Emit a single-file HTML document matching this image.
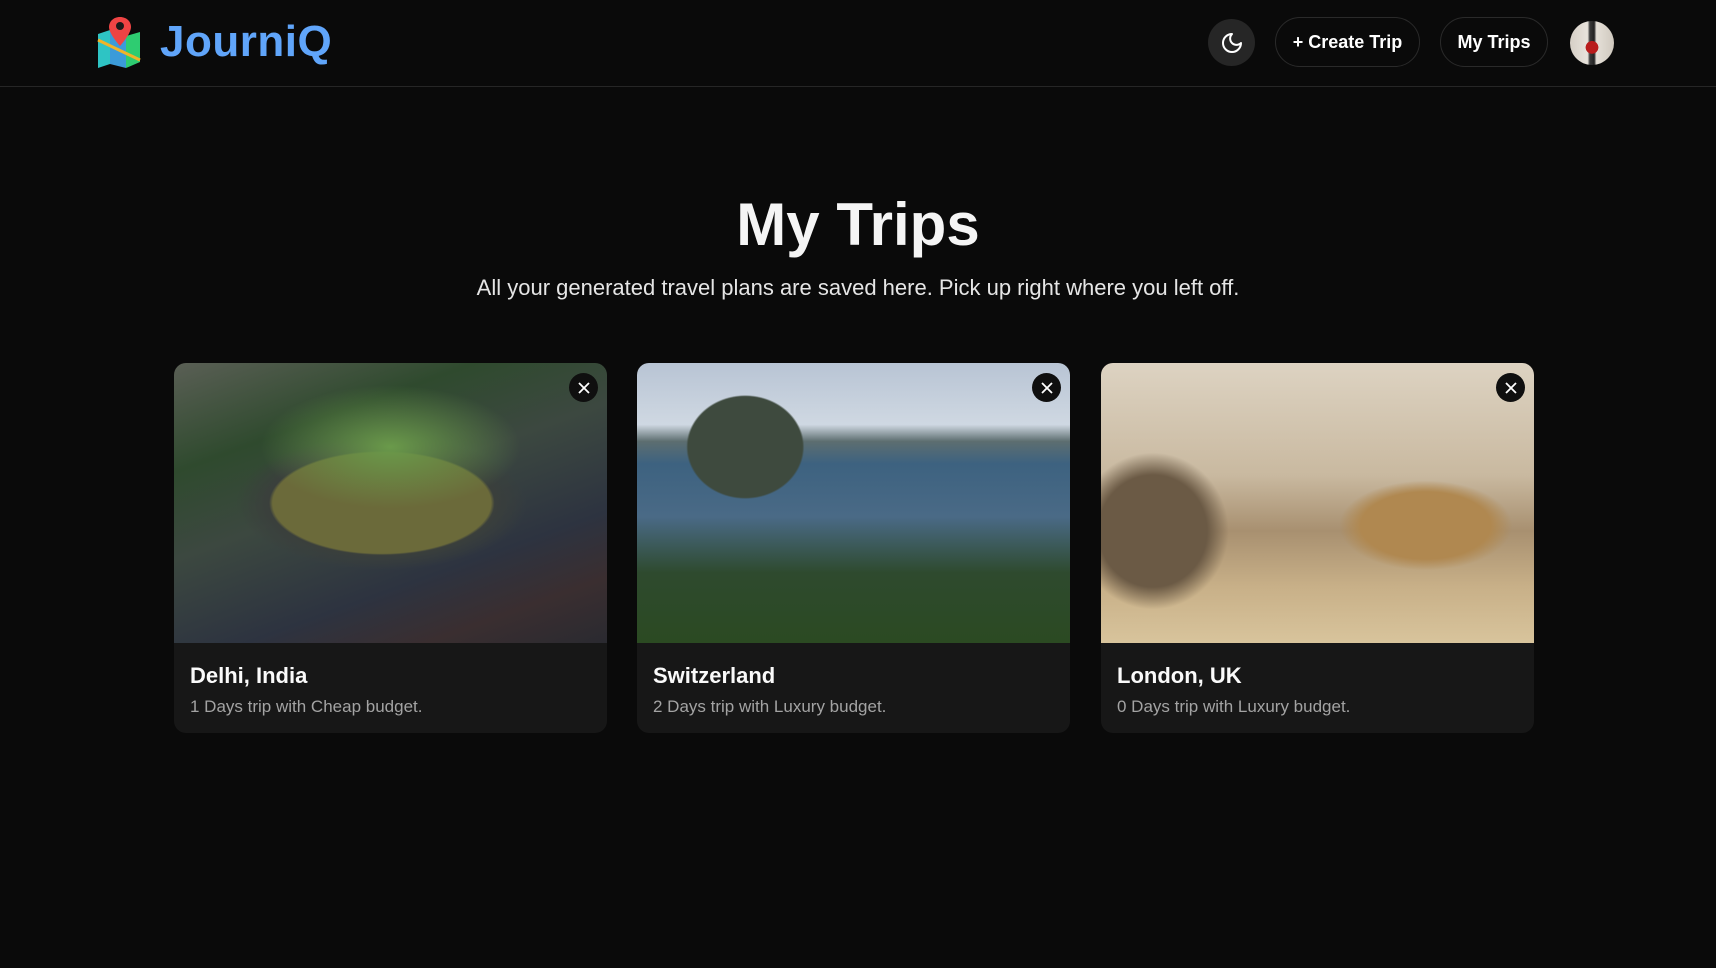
<!DOCTYPE html>
<html><head><meta charset="utf-8"><style>
*{margin:0;padding:0;box-sizing:border-box}
body{width:1716px;height:968px;background:#0a0a0a;font-family:"Liberation Sans",sans-serif;color:#fff;overflow:hidden;position:relative}
.hdr{position:absolute;left:0;top:0;width:1716px;height:87px;border-bottom:1px solid #262626}
.logo{position:absolute;left:160px;top:17px;font-size:44px;font-weight:bold;color:#60a5fa;letter-spacing:0.5px}
.btn{position:absolute;top:17px;height:50px;border:1px solid #2a2a2a;border-radius:25px;font-size:18px;font-weight:bold;display:flex;align-items:center;justify-content:center}
.moon{position:absolute;left:1208px;top:19px;width:47px;height:47px;border-radius:50%;background:#262626;display:flex;align-items:center;justify-content:center}
.av{position:absolute;left:1570px;top:21px;width:44px;height:44px;border-radius:50%;background:radial-gradient(circle at 50% 60%,#b91c1c 0 18%,transparent 19%),linear-gradient(90deg,#d6cfc6,#e8e3dc 40%,#3a3a3a 45%,#222 55%,#e5e0d8 60%,#cfc8be);overflow:hidden}
h1{position:absolute;top:190px;width:1716px;text-align:center;font-size:60px;font-weight:bold;color:#f5f5f5}
.sub{position:absolute;top:275px;width:1716px;text-align:center;font-size:22px;color:#e5e5e5}
.card{position:absolute;top:363px;width:433px;height:370px;background:#171717;border-radius:12px;overflow:hidden}
.img{height:280px}
.x{position:absolute;width:29px;height:29px;border-radius:50%;background:#0f0f0f;display:flex;align-items:center;justify-content:center;top:10px;right:9px}
.ct{position:absolute;left:16px;top:300px;font-size:22px;font-weight:bold;color:#fafafa}
.cd{position:absolute;left:16px;top:334px;font-size:17px;color:#a3a3a3}
</style></head><body>
<div class="hdr">
<svg style="position:absolute;left:96px;top:16px" width="46" height="52" viewBox="0 0 46 52">
<path d="M2 18 L14 14 L14 48 L2 52 Z" fill="#2ec4c4"/>
<path d="M14 14 L30 20 L30 52 L14 48 Z" fill="#3b9bd9"/>
<path d="M30 20 L44 16 L44 46 L30 52 Z" fill="#2ecc71"/>
<path d="M2 24 L44 44" stroke="#f0b429" stroke-width="3"/>
<path d="M24 1 C17 1 13 6 13 11 C13 18 24 30 24 30 C24 30 35 18 35 11 C35 6 31 1 24 1 Z" fill="#ef4444"/>
<circle cx="24" cy="10" r="4" fill="#1a1a1a"/>
</svg>
<div class="logo">JourniQ</div>
<div class="moon"><svg width="24" height="24" viewBox="0 0 24 24" fill="none" stroke="#fff" stroke-width="2" stroke-linecap="round" stroke-linejoin="round"><path d="M12 3a6 6 0 0 0 9 9 9 9 0 1 1-9-9Z"/></svg></div>
<div class="btn" style="left:1275px;width:145px">+ Create Trip</div>
<div class="btn" style="left:1440px;width:108px">My Trips</div>
<div class="av"></div>
</div>
<h1>My Trips</h1>
<div class="sub">All your generated travel plans are saved here. Pick up right where you left off.</div>

<div class="card" style="left:174px">
<div class="img" style="background:radial-gradient(ellipse 30% 22% at 50% 30%,#6a9a4a,transparent),radial-gradient(ellipse 42% 30% at 48% 50%,#6b6a3a 0 60%,#3a3f3c 62%,transparent 80%),linear-gradient(160deg,#5a5f55 0%,#2f4a2e 25%,#3c4840 45%,#2d3340 70%,#3a2e30 85%,#2a2a30 100%)"></div>
<div class="x"><svg width="14" height="14" viewBox="0 0 14 14" stroke="#fff" stroke-width="1.8"><path d="M2 2L12 12M12 2L2 12"/></svg></div>
<div class="ct">Delhi, India</div><div class="cd">1 Days trip with Cheap budget.</div>
</div>

<div class="card" style="left:637px">
<div class="img" style="background:radial-gradient(ellipse 22% 30% at 25% 30%,#3e4a3e 0 60%,transparent 62%),linear-gradient(180deg,#b8c4d4 0%,#cfd8e2 22%,#5d6e70 28%,#3d6280 36%,#4a6a86 55%,#2e4a2e 75%,#2b4a22 100%)"></div>
<div class="x"><svg width="14" height="14" viewBox="0 0 14 14" stroke="#fff" stroke-width="1.8"><path d="M2 2L12 12M12 2L2 12"/></svg></div>
<div class="ct">Switzerland</div><div class="cd">2 Days trip with Luxury budget.</div>
</div>

<div class="card" style="left:1101px">
<div class="img" style="background:radial-gradient(ellipse 25% 40% at 12% 60%,#6b5a45 0 50%,transparent 70%),radial-gradient(ellipse 25% 20% at 75% 58%,#b08850 0 60%,transparent 80%),linear-gradient(180deg,#ddd3c2 0%,#c9b9a0 40%,#a89070 60%,#c8b088 80%,#d8c49c 100%)"></div>
<div class="x"><svg width="14" height="14" viewBox="0 0 14 14" stroke="#fff" stroke-width="1.8"><path d="M2 2L12 12M12 2L2 12"/></svg></div>
<div class="ct">London, UK</div><div class="cd">0 Days trip with Luxury budget.</div>
</div>
</body></html>
